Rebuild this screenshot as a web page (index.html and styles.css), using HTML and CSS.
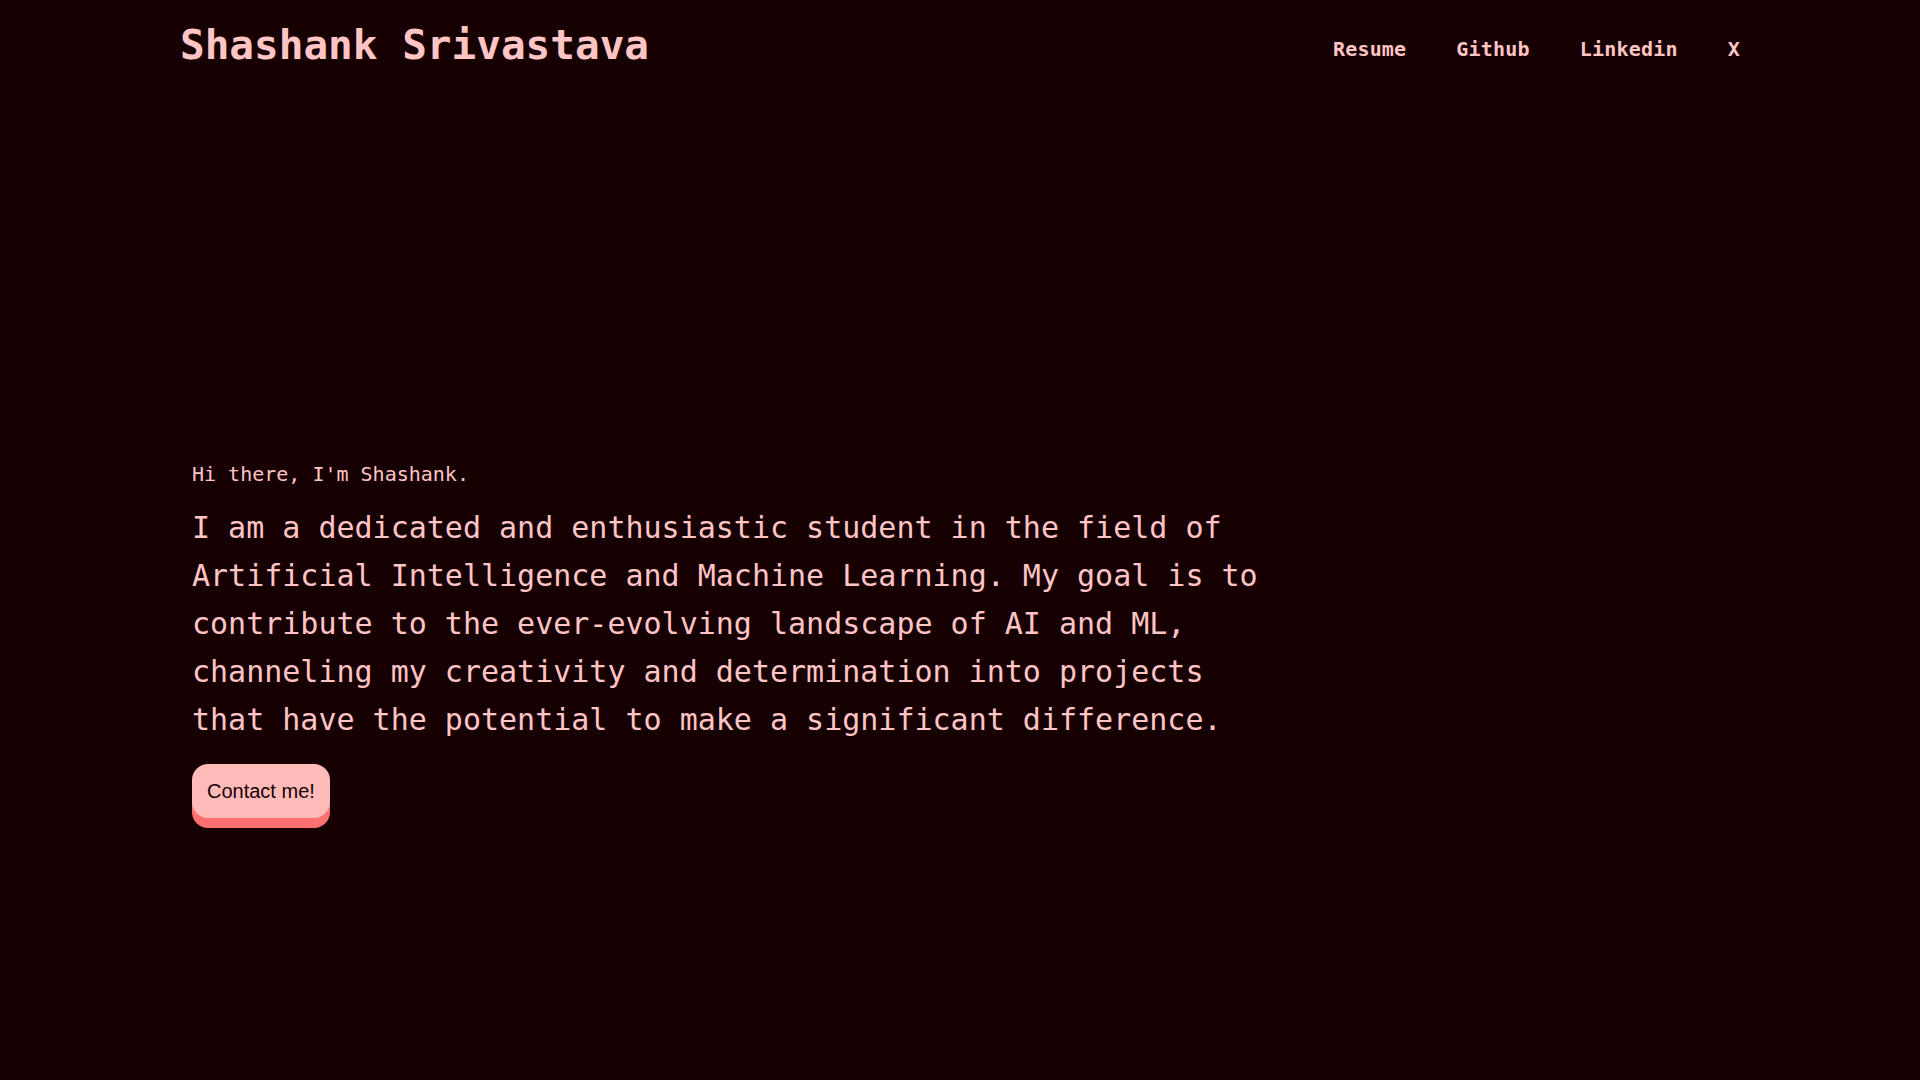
FILE: index.html
```html
<!DOCTYPE html>
<html lang="en">
<head>
<meta charset="utf-8">
<title>Shashank Srivastava</title>
<link rel="stylesheet" href="styles.css">
</head>
<body>
<div class="page">
  <header class="header">
    <div class="brand">Shashank Srivastava</div>
    <nav class="nav">
      <a href="#">Resume</a>
      <a href="#">Github</a>
      <a href="#">Linkedin</a>
      <a href="#">X</a>
    </nav>
  </header>
  <main class="hero">
    <p class="intro">Hi there, I'm Shashank.</p>
    <p class="lead">I am a dedicated and enthusiastic student in the field of Artificial Intelligence and Machine Learning. My goal is to contribute to the ever-evolving landscape of AI and ML, channeling my creativity and determination into projects that have the potential to make a significant difference.</p>
    <button class="cta">Contact me!</button>
  </main>
</div>
</body>
</html>
```
FILE: styles.css
```css
html, body {
  margin: 0;
  padding: 0;
  height: 100%;
  overflow: hidden;
}
body {
  background: #170002;
  color: #ffc4c4;
  font-family: "DejaVu Sans Mono", "Liberation Mono", monospace;
}
.page {
  width: 1560px;
  margin: 0 auto;
}
.header {
  height: 90px;
  display: flex;
  align-items: center;
  justify-content: space-between;
}
.brand {
  font-size: 41px;
  font-weight: 700;
  color: #ffc4c4;
  line-height: 1;
}
.nav {
  display: flex;
  gap: 50px;
  margin-top: 8px;
}
.nav a {
  color: #ffc4c4;
  text-decoration: none;
  font-size: 20px;
  font-weight: 700;
  letter-spacing: 0.2px;
}
.hero {
  padding-left: 12px;
  padding-top: 369px;
  display: flex;
  flex-direction: column;
  align-items: flex-start;
}
.intro {
  margin: 0;
  font-size: 20px;
  line-height: 30px;
}
.lead {
  margin: 15px 0 0;
  max-width: 1080px;
  font-size: 30px;
  line-height: 48px;
}
.cta {
  margin-top: 20px;
  font-family: "Liberation Sans", Arial, sans-serif;
  font-size: 20px;
  color: #1a0003;
  background: #ffbaba;
  border: none;
  border-radius: 16px;
  padding: 0 15px;
  height: 54px;
  box-shadow: 0 10px 0 #ff7070;
  cursor: pointer;
}
```
